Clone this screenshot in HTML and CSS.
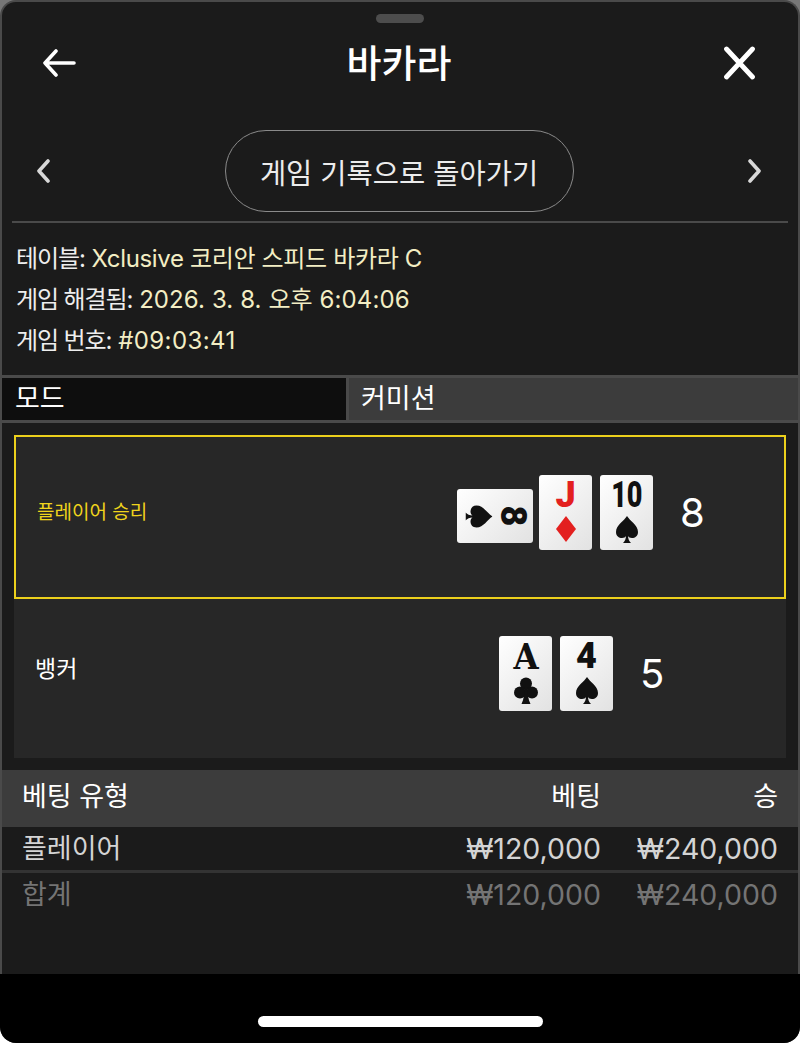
FILE: index.html
```html
<!DOCTYPE html>
<html lang="ko">
<head>
    <meta charset="UTF-8">
    <meta name="viewport" content="width=device-width, initial-scale=1.0">
    <title>바카라</title>
    <link rel="stylesheet" href="styles.css">
</head>
<body>
    <svg class="defs">
        <symbol id="spade" viewBox="0 0 24 27"><path d="M12 0C9 5 1 9 1 16c0 4 3 6 6 6 2 0 3.5-1 4-2-.2 3-1 5-3 7h8c-2-2-2.8-4-3-7 .5 1 2 2 4 2 3 0 6-2 6-6C23 9 15 5 12 0z"/></symbol>
        <symbol id="club" viewBox="0 0 24 27"><circle cx="12" cy="6.5" r="6"/><circle cx="6" cy="15.5" r="6"/><circle cx="18" cy="15.5" r="6"/><path d="M10.5 10h3c0 7 .6 12 3 17H7.5c2.400-5 3-10 3-17z"/></symbol>
        <symbol id="diamond" viewBox="0 0 20 26"><path d="M10 0 20 13 10 26 0 13z"/></symbol>
    </svg>

    <div class="sheet">
        <div class="panel">
            <div class="grabber"></div>

            <header class="top-bar">
                <svg class="icon-back" viewBox="0 0 34 28" width="34" height="28"><path d="M32 14H3M14 2 3 14l11 12" fill="none" stroke="#fff" stroke-width="3.6" stroke-linecap="round" stroke-linejoin="round"/></svg>
                <h1>바카라</h1>
                <svg class="icon-close" viewBox="0 0 34 34" width="34" height="34"><path d="M4.500 3l26 28M30.500 3l-26 28" fill="none" stroke="#fff" stroke-width="4.800" stroke-linecap="round"/></svg>
            </header>

            <div class="nav-row">
                <svg viewBox="0 0 14 24" width="14" height="24"><path d="M12 2 3 12l9 10" fill="none" stroke="#d8d8d8" stroke-width="3.600" stroke-linecap="round" stroke-linejoin="round"/></svg>
                <button class="history-btn">게임 기록으로 돌아가기</button>
                <svg viewBox="0 0 14 24" width="14" height="24"><path d="M2 2l9 10-9 10" fill="none" stroke="#d8d8d8" stroke-width="3.600" stroke-linecap="round" stroke-linejoin="round"/></svg>
            </div>

            <div class="info">
                <p><b>테이블:</b> <span class="tight">Xclusive 코리안 스피드 바카라 C</span></p>
                <p><b>게임 해결됨:</b> <span>2026. 3. 8. 오후 6:04:06</span></p>
                <p><b>게임 번호:</b> <span class="wide">#09:03:41</span></p>
            </div>

            <div class="mode-row">
                <div class="mode-cell mode-dark">모드</div>
                <div class="mode-cell mode-light">커미션</div>
            </div>

            <section class="hands">
                <div class="hand hand-win">
                    <div class="hand-name">플레이어 승리</div>
                    <div class="hand-cards">
                        <div class="card card-side">
                            <svg class="suit side-suit"><use href="#spade"/></svg>
                            <span class="rank">8</span>
                        </div>
                        <div class="card red">
                            <span class="rank">J</span>
                            <svg class="suit diamond"><use href="#diamond"/></svg>
                        </div>
                        <div class="card">
                            <span class="rank ten">10</span>
                            <svg class="suit"><use href="#spade"/></svg>
                        </div>
                        <div class="score">8</div>
                    </div>
                </div>
                <div class="hand hand-lose">
                    <div class="hand-name">뱅커</div>
                    <div class="hand-cards">
                        <div class="card">
                            <span class="rank ace">A</span>
                            <svg class="suit"><use href="#club"/></svg>
                        </div>
                        <div class="card">
                            <span class="rank">4</span>
                            <svg class="suit"><use href="#spade"/></svg>
                        </div>
                        <div class="score">5</div>
                    </div>
                </div>
            </section>

            <div class="bets">
                <div class="bet-row bet-head">
                    <div class="col-type">베팅 유형</div>
                    <div class="col-amt">베팅</div>
                    <div class="col-win">승</div>
                </div>
                <div class="bet-row bet-item">
                    <div class="col-type">플레이어</div>
                    <div class="col-amt money">₩120,000</div>
                    <div class="col-win money">₩240,000</div>
                </div>
                <div class="bet-row bet-total">
                    <div class="col-type">합계</div>
                    <div class="col-amt money">₩120,000</div>
                    <div class="col-win money">₩240,000</div>
                </div>
            </div>
        </div>

        <footer class="home-area">
            <div class="home-bar"></div>
        </footer>
    </div>
</body>
</html>
```

FILE: styles.css
```css
* {
    box-sizing: border-box;
}

html, body {
    margin: 0;
    height: 100%;
    background: #fff;
}

body {
    font-family: "Inter", "Noto Sans CJK KR", sans-serif;
    color: #fff;
    overflow: hidden;
}

.defs {
    display: none;
}

.sheet {
    height: 1043px;
    display: flex;
    flex-direction: column;
    background: #777;
    border-radius: 0 0 16px 16px;
    overflow: hidden;
}

.panel {
    height: 974px;
    background: #1b1b1b;
    border: solid #4a4a4a;
    border-width: 2px 2px 0;
    border-radius: 16px 16px 0 0;
    overflow: hidden;
}

.grabber {
    width: 48px;
    height: 9px;
    margin: 12px auto 0;
    border-radius: 5px;
    background: #4d4d4d;
}

.top-bar {
    height: 64px;
    margin-top: 8px;
    padding: 0 42px 0 40px;
    display: flex;
    align-items: center;
    justify-content: space-between;
}

.top-bar h1 {
    margin: 0;
    font-size: 38px;
    font-weight: 500;
    line-height: 64px;
}

.nav-row {
    margin: 36px 10px 0;
    padding: 0 26px 10px 24px;
    height: 92px;
    display: flex;
    align-items: center;
    justify-content: space-between;
    border-bottom: 2px solid #4a4a4a;
}

.history-btn {
    width: 349px;
    height: 82px;
    background: transparent;
    border: 1px solid #8a8a8a;
    border-radius: 41px;
    color: #ececec;
    font: inherit;
    font-size: 28.5px;
}

.info {
    padding: 15px 14px 0;
    height: 152px;
}

.info p {
    margin: 0;
    font-size: 24px;
    line-height: 41px;
}

.info b {
    font-weight: 400;
    color: #eee;
    letter-spacing: -1.1px;
}

.info span {
    color: #f3eec4;
    letter-spacing: 0.1px;
}

.info span.tight {
    letter-spacing: -0.35px;
}

.info span.wide {
    letter-spacing: 0.4px;
}

.mode-row {
    display: flex;
    height: 48px;
    border-top: 3px solid #4a4a4a;
    border-bottom: 3px solid #4a4a4a;
}

.mode-cell {
    font-size: 27px;
    line-height: 41px;
    padding-left: 13px;
}

.mode-dark {
    width: 347px;
    background: #0e0e0e;
    border-right: 3px solid #4a4a4a;
}

.mode-light {
    flex: 1;
    padding-left: 12px;
    background: #3c3c3c;
}

.hands {
    margin: 12px 12px 0;
    height: 323px;
    background: #272727;
}

.hand {
    display: flex;
    align-items: center;
    height: 164px;
}

.hand-win {
    border: 2px solid #ecd01c;
}

.hand-name {
    font-size: 19px;
    width: 441px;
    padding-left: 21px;
    margin-bottom: 14px;
}

.hand-win .hand-name {
    color: #f0d41c;
}

.hand-cards {
    display: flex;
    align-items: center;
    gap: 8px;
    margin-bottom: 10px;
}

.hand-lose {
    height: 159px;
}

.hand-lose .hand-name {
    width: 485px;
    padding-left: 21px;
    margin-bottom: 24px;
    font-size: 23px;
}

.hand-lose .hand-cards {
    margin-bottom: 10px;
}

.card {
    width: 53px;
    height: 75px;
    padding-top: 5px;
    border-radius: 3px;
    background: linear-gradient(135deg, #fff, #e2e2e2);
    color: #111;
    fill: #111;
    display: flex;
    flex-direction: column;
    align-items: center;
    overflow: hidden;
}

.card .rank {
    font-family: "Roboto", sans-serif;
    font-weight: 900;
    font-size: 36px;
    line-height: 30px;
}

.card .rank.ten {
    transform: scaleX(0.75);
}

.card .rank.ace {
    font-family: "DejaVu Serif", serif;
    font-weight: 700;
    font-size: 36px;
    transform: scaleX(0.9);
}

.card .suit {
    width: 24px;
    height: 27px;
    margin-top: 6px;
}

.card .suit.diamond {
    width: 20px;
    height: 26px;
}

.card.red {
    color: #e3201f;
    fill: #e3201f;
}

.card-side {
    width: 76px;
    height: 54px;
    margin: 8px -2px 0 0;
    padding-top: 0;
    flex-direction: row;
    justify-content: center;
    gap: 8px;
}

.card .suit.side-suit {
    width: 24px;
    height: 27px;
    margin: 0 4px 0 0;
    transform: rotate(90deg);
}

.card-side .rank {
    transform: rotate(90deg);
}

.score {
    font-size: 40px;
    margin-left: 19px;
    width: 50px;
}

.bets {
    margin-top: 12px;
}

.bet-row {
    display: flex;
    padding: 0 20px;
    font-size: 27px;
}

.col-type {
    flex: 1;
}

.col-amt {
    width: 200px;
    text-align: right;
}

.col-win {
    width: 177px;
    text-align: right;
}

.money {
    font-size: 28.5px;
}

.bet-head {
    height: 57px;
    line-height: 54px;
    background: #3c3c3c;
}

.bet-item {
    height: 46px;
    line-height: 44px;
    background: #1b1b1b;
    color: #d4d4d4;
    border-bottom: 3px solid #333;
}

.bet-total {
    line-height: 44px;
    color: #747474;
}

.home-area {
    height: 69px;
    background: #000;
    display: flex;
    justify-content: center;
    padding-top: 42px;
}

.home-bar {
    width: 285px;
    height: 11px;
    border-radius: 6px;
    background: #fff;
}
```
